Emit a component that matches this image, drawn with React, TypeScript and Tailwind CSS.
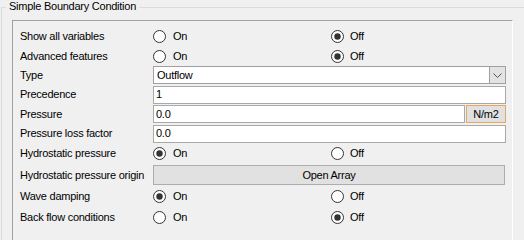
import React from "react";

function Radio({ checked }: { checked: boolean }) {
  return (
    <svg width="13" height="13" viewBox="0 0 13 13" className="shrink-0">
      <circle cx="6.5" cy="6.5" r="6" fill="#ffffff" stroke="#333333" strokeWidth="1" />
      {checked && <circle cx="6.5" cy="6.5" r="3.2" fill="#333333" />}
    </svg>
  );
}

function RadioPair({ on }: { on: boolean }) {
  return (
    <div className="flex items-center">
      <div className="flex items-center gap-[7px] w-[178px]">
        <Radio checked={on} />
        <span>On</span>
      </div>
      <div className="flex items-center gap-[6px]">
        <Radio checked={!on} />
        <span>Off</span>
      </div>
    </div>
  );
}

function Row({ label, h, children }: { label: string; h: string; children: React.ReactNode }) {
  return (
    <div className={`flex items-center ${h}`}>
      <div className="w-[133px] shrink-0 whitespace-nowrap">{label}</div>
      {children}
    </div>
  );
}

export default function App() {
  return (
    <div className="w-[524px] h-[240px] bg-[#f0f0f0] overflow-hidden text-black text-[11px] tracking-[-0.25px] font-['Liberation_Sans',Arial,sans-serif]">
      <div className="relative ml-[1px] mt-[7px] w-[560px] h-[300px] border-l border-t border-[#dcdcdc]">
        <div className="absolute -top-[8px] left-[4px] px-[3px] bg-[#f0f0f0] leading-[13px] whitespace-nowrap">
          Simple Boundary Condition
        </div>
        <div className="ml-[10px] mt-[12px] w-[501px] h-[260px] border-l border-t border-[#a0a0a0] border-r border-r-white border-b border-b-white pt-[5px] pl-[7px]">
          <Row label="Show all variables" h="h-[20px]">
            <RadioPair on={false} />
          </Row>
          <Row label="Advanced features" h="h-[20px]">
            <RadioPair on={false} />
          </Row>
          <Row label="Type" h="h-[19px]">
            <div className="flex w-[353px] h-[18px] bg-white border border-[#a0a0a0] mt-[-1px]">
              <div className="flex-1 pl-[3px] flex items-center">Outflow</div>
              <div className="w-[16px] h-full bg-[#e3e3e3] border-l border-[#a0a0a0] flex items-center justify-center">
                <svg width="9" height="5" viewBox="0 0 9 5">
                  <path d="M0.5 0.5 L4.5 4.5 L8.5 0.5" fill="none" stroke="#555555" strokeWidth="1" />
                </svg>
              </div>
            </div>
          </Row>
          <Row label="Precedence" h="h-[19px]">
            <div className="w-[353px] h-[18px] bg-white border border-[#a9a9a9] pl-[2px] flex items-center">1</div>
          </Row>
          <Row label="Pressure" h="h-[20px]">
            <div className="flex w-[353px] h-[18px] gap-[1px]">
              <div className="flex-1 bg-white border border-[#a9a9a9] pl-[2px] flex items-center">0.0</div>
              <div className="w-[40px] bg-[#e1e1e1] border border-[#eba55c] flex items-center justify-center">N/m2</div>
            </div>
          </Row>
          <Row label="Pressure loss factor" h="h-[19px]">
            <div className="w-[353px] h-[18px] bg-white border border-[#a9a9a9] pl-[2px] flex items-center">0.0</div>
          </Row>
          <Row label="Hydrostatic pressure" h="h-[21px]">
            <RadioPair on={true} />
          </Row>
          <Row label="Hydrostatic pressure origin" h="h-[22px]">
            <div className="w-[352px] h-[20px] bg-[#e1e1e1] border border-[#adadad] flex items-center justify-center">
              Open Array
            </div>
          </Row>
          <Row label="Wave damping" h="h-[21px]">
            <RadioPair on={true} />
          </Row>
          <Row label="Back flow conditions" h="h-[20px]">
            <RadioPair on={false} />
          </Row>
        </div>
      </div>
    </div>
  );
}
